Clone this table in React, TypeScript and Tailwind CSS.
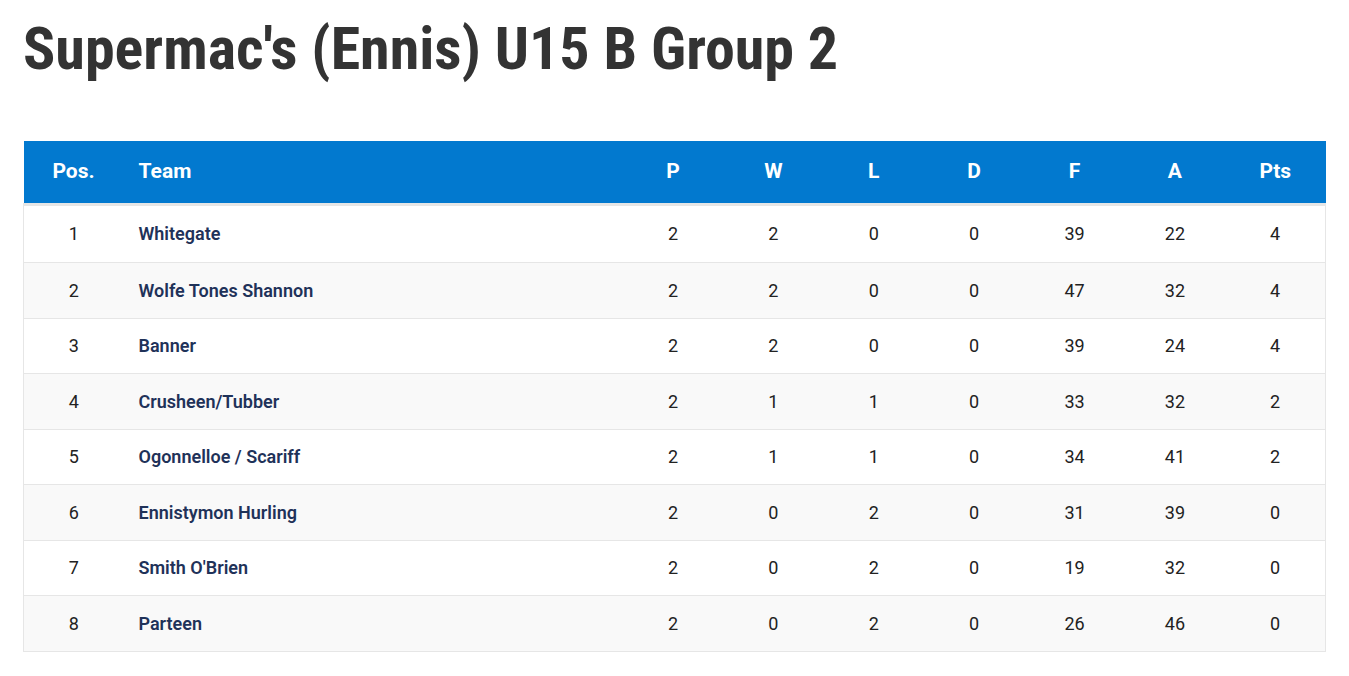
const rows = [
  { pos: 1, team: "Whitegate", p: 2, w: 2, l: 0, d: 0, f: 39, a: 22, pts: 4 },
  { pos: 2, team: "Wolfe Tones Shannon", p: 2, w: 2, l: 0, d: 0, f: 47, a: 32, pts: 4 },
  { pos: 3, team: "Banner", p: 2, w: 2, l: 0, d: 0, f: 39, a: 24, pts: 4 },
  { pos: 4, team: "Crusheen/Tubber", p: 2, w: 1, l: 1, d: 0, f: 33, a: 32, pts: 2 },
  { pos: 5, team: "Ogonnelloe / Scariff", p: 2, w: 1, l: 1, d: 0, f: 34, a: 41, pts: 2 },
  { pos: 6, team: "Ennistymon Hurling", p: 2, w: 0, l: 2, d: 0, f: 31, a: 39, pts: 0 },
  { pos: 7, team: "Smith O'Brien", p: 2, w: 0, l: 2, d: 0, f: 19, a: 32, pts: 0 },
  { pos: 8, team: "Parteen", p: 2, w: 0, l: 2, d: 0, f: 26, a: 46, pts: 0 },
];

const stats = ["P", "W", "L", "D", "F", "A", "Pts"];

export default function App() {
  return (
    <div className="min-h-screen bg-white px-[23px] pt-[14px] font-['Roboto',sans-serif] text-[#222]">
      <h1 className="text-[60px] font-bold leading-[70px] text-[#333] [font-stretch:condensed] font-['Roboto_Condensed','Roboto',sans-serif]">
        Supermac's (Ennis) U15 B Group 2
      </h1>

      <table className="mt-[57px] w-full table-fixed border-collapse">
        <colgroup>
          <col className="w-[100px]" />
          <col />
          {stats.map((s) => (
            <col key={s} className="w-[100.4px]" />
          ))}
        </colgroup>
        <thead>
          <tr className="h-[63px] bg-[#0279cf] text-[21px] font-bold text-white">
            <th className="text-center">Pos.</th>
            <th className="pl-[15px] text-left">Team</th>
            {stats.map((s) => (
              <th key={s} className="text-center">
                {s}
              </th>
            ))}
          </tr>
        </thead>
        <tbody className="text-[18px]">
          {rows.map((r, i) => (
            <tr
              key={r.pos}
              className={`border border-[#e6e6e6] ${i === 0 ? "h-[58.5px] border-t-[3px]" : "h-[55.5px]"} ${
                i % 2 === 1 ? "bg-[#f9f9f9]" : "bg-white"
              }`}
            >
              <td className="text-center">{r.pos}</td>
              <td className="pl-[15px] font-semibold text-[#1f3259]">{r.team}</td>
              <td className="text-center">{r.p}</td>
              <td className="text-center">{r.w}</td>
              <td className="text-center">{r.l}</td>
              <td className="text-center">{r.d}</td>
              <td className="text-center">{r.f}</td>
              <td className="text-center">{r.a}</td>
              <td className="text-center">{r.pts}</td>
            </tr>
          ))}
        </tbody>
      </table>
    </div>
  );
}
